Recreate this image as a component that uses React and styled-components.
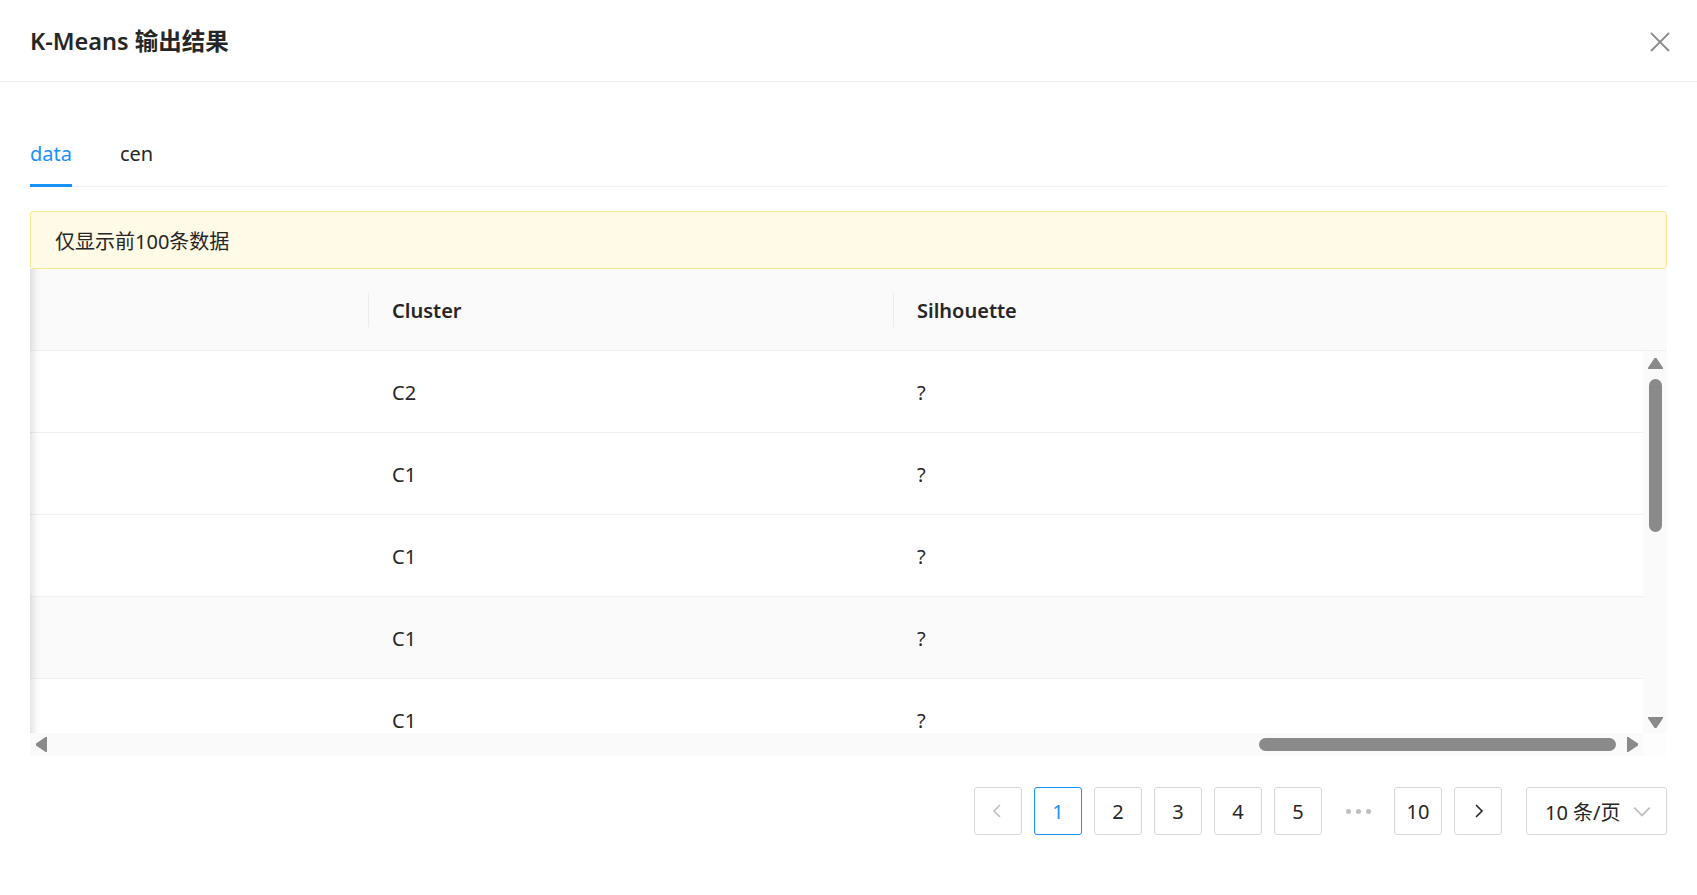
import styled, { createGlobalStyle } from "styled-components";

const GlobalStyle = createGlobalStyle`
  html, body {
    margin: 0;
    padding: 0;
    background: #fff;
  }
  body {
    font-family: "Noto Sans", "Noto Sans CJK SC", sans-serif;
    color: #262626;
  }
  * { box-sizing: border-box; }
`;

const Modal = styled.div`
  width: 100%;
  height: 100vh;
  background: #fff;
`;

const Header = styled.div`
  height: 82px;
  padding: 2px 26px 0 30px;
  display: flex;
  align-items: center;
  justify-content: space-between;
  border-bottom: 1px solid #f0f0f0;
`;

const Title = styled.div`
  font-size: 23.5px;
  font-weight: 600;
  line-height: 33px;
  color: #262626;
`;

const Close = styled.button`
  border: 0;
  background: none;
  padding: 0;
  width: 22px;
  height: 22px;
  display: flex;
  align-items: center;
  justify-content: center;
  color: #8c8c8c;
  cursor: pointer;
`;

const Body = styled.div`
  padding: 36px 30px 0;
`;

const TabNav = styled.div`
  display: flex;
  gap: 48px;
  border-bottom: 1px solid #f0f0f0;
  margin-bottom: 24px;
`;

const Tab = styled.div`
  position: relative;
  padding: 19px 0 16px;
  font-size: 20px;
  line-height: 33px;
  color: ${({ $active }) => ($active ? "#1890ff" : "#262626")};

  &::after {
    content: "";
    display: ${({ $active }) => ($active ? "block" : "none")};
    position: absolute;
    left: 0;
    right: 0;
    bottom: -1px;
    height: 3px;
    background: #1890ff;
  }
`;

const Alert = styled.div`
  height: 58px;
  display: flex;
  align-items: center;
  padding: 0 24px;
  background: #fffbe6;
  border: 1px solid #ffe58f;
  border-radius: 3px;
  font-size: 20px;
  color: #262626;
`;

const TableWrap = styled.div`
  position: relative;
`;

const LeftShadow = styled.div`
  position: absolute;
  left: 0;
  top: 0;
  bottom: 23px;
  width: 20px;
  box-shadow: inset 12px 0 10px -10px rgba(0, 0, 0, 0.16);
  pointer-events: none;
`;

const cols = "338px 525px 1fr";

const HeadRow = styled.div`
  display: grid;
  grid-template-columns: ${cols};
  height: 82px;
  background: #fafafa;
  border-bottom: 1px solid #f0f0f0;
`;

const HeadCell = styled.div`
  position: relative;
  display: flex;
  align-items: center;
  padding: 2px 24px 0;
  font-size: 20px;
  font-weight: 600;
  color: #262626;

  &::before {
    content: "";
    display: ${({ $sep }) => ($sep ? "block" : "none")};
    position: absolute;
    left: 0;
    top: 50%;
    height: 34px;
    margin-top: -17px;
    width: 1px;
    background: #ebebeb;
  }
`;

const BodyArea = styled.div`
  display: flex;
  height: 382px;
`;

const Rows = styled.div`
  flex: 1;
  overflow: hidden;
`;

const Row = styled.div`
  display: grid;
  grid-template-columns: ${cols};
  height: 82px;
  border-bottom: 1px solid #f0f0f0;
  background: ${({ $hover }) => ($hover ? "#fafafa" : "#fff")};
`;

const Cell = styled.div`
  display: flex;
  align-items: center;
  padding: 2px 24px 0;
  font-size: 20px;
  color: #262626;
`;

const VBar = styled.div`
  width: 24px;
  background: #fafafa;
  display: flex;
  flex-direction: column;
  align-items: center;
  padding: 7px 0 5px;
`;

const VThumb = styled.div`
  width: 13px;
  height: 153px;
  margin-top: 10px;
  border-radius: 7px;
  background: #8a8a8a;
`;

const Spacer = styled.div`
  flex: 1;
`;

const HBarRow = styled.div`
  display: flex;
  height: 23px;
`;

const HTrack = styled.div`
  flex: 1;
  display: flex;
  align-items: center;
  padding: 0 5px 0 6px;
  background: #fafafa;
`;

const HThumb = styled.div`
  width: 357px;
  height: 13px;
  margin-right: 11px;
  border-radius: 7px;
  background: #8a8a8a;
`;

const Corner = styled.div`
  width: 24px;
  background: #fdfdfd;
`;

const Pager = styled.div`
  display: flex;
  justify-content: flex-end;
  align-items: center;
  gap: 12px;
  margin-top: 31px;
`;

const PageItem = styled.div`
  width: 48px;
  height: 48px;
  display: flex;
  align-items: center;
  justify-content: center;
  border: 1px solid ${({ $active }) => ($active ? "#1890ff" : "#d9d9d9")};
  border-radius: 3px;
  font-size: 20px;
  color: ${({ $active, $disabled }) =>
    $active ? "#1890ff" : $disabled ? "#bfbfbf" : "#262626"};
  background: #fff;
`;

const Ellipsis = styled.div`
  width: 48px;
  height: 48px;
  display: flex;
  align-items: center;
  justify-content: center;
  gap: 5px;
`;

const Dot = styled.span`
  width: 5px;
  height: 5px;
  border-radius: 50%;
  background: #bfbfbf;
`;

const SizeSelect = styled.div`
  width: 141px;
  height: 48px;
  margin-left: 12px;
  display: flex;
  align-items: center;
  justify-content: space-between;
  padding: 0 14px 0 18px;
  border: 1px solid #d9d9d9;
  border-radius: 3px;
  font-size: 20px;
  color: #262626;
`;

const Tri = ({ dir }) => {
  const pts = {
    up: "7.5,0 15,11 0,11",
    down: "0,0 15,0 7.5,11",
    left: "11,0 11,15 0,7.5",
    right: "0,0 11,7.5 0,15",
  }[dir];
  const vert = dir === "up" || dir === "down";
  return (
    <svg width={vert ? 15 : 11} height={vert ? 11 : 15} viewBox={vert ? "0 0 15 11" : "0 0 11 15"}>
      <polygon points={pts} fill="#8a8a8a" stroke="#8a8a8a" strokeWidth="1.5" strokeLinejoin="round" />
    </svg>
  );
};

const Chevron = ({ dir, color, size = 18 }) => {
  const d = {
    left: "M11 3 L5 9 L11 15",
    right: "M7 3 L13 9 L7 15",
    down: "M2 6 L9 13 L16 6",
  }[dir];
  return (
    <svg width={size} height={size} viewBox="0 0 18 18">
      <path d={d} fill="none" stroke={color} strokeWidth="1.6" />
    </svg>
  );
};

const rows = [
  { cluster: "C2", sil: "?" },
  { cluster: "C1", sil: "?" },
  { cluster: "C1", sil: "?" },
  { cluster: "C1", sil: "?", hover: true },
  { cluster: "C1", sil: "?" },
];

export default function App() {
  return (
    <>
      <GlobalStyle />
      <Modal>
        <Header>
          <Title>K-Means 输出结果</Title>
          <Close aria-label="close">
            <svg width="20" height="20" viewBox="0 0 20 20">
              <path d="M1 1 L19 19 M19 1 L1 19" stroke="currentColor" strokeWidth="1.8" fill="none" />
            </svg>
          </Close>
        </Header>
        <Body>
          <TabNav>
            <Tab $active>data</Tab>
            <Tab>cen</Tab>
          </TabNav>
          <Alert>仅显示前100条数据</Alert>
          <TableWrap>
            <HeadRow>
              <HeadCell />
              <HeadCell $sep>Cluster</HeadCell>
              <HeadCell $sep>Silhouette</HeadCell>
            </HeadRow>
            <BodyArea>
              <Rows>
                {rows.map((r, i) => (
                  <Row key={i} $hover={r.hover}>
                    <Cell />
                    <Cell>{r.cluster}</Cell>
                    <Cell>{r.sil}</Cell>
                  </Row>
                ))}
              </Rows>
              <VBar>
                <Tri dir="up" />
                <VThumb />
                <Spacer />
                <Tri dir="down" />
              </VBar>
            </BodyArea>
            <HBarRow>
              <HTrack>
                <Tri dir="left" />
                <Spacer />
                <HThumb />
                <Tri dir="right" />
              </HTrack>
              <Corner />
            </HBarRow>
            <LeftShadow />
          </TableWrap>
          <Pager>
            <PageItem $disabled>
              <Chevron dir="left" color="#bfbfbf" />
            </PageItem>
            <PageItem $active>1</PageItem>
            <PageItem>2</PageItem>
            <PageItem>3</PageItem>
            <PageItem>4</PageItem>
            <PageItem>5</PageItem>
            <Ellipsis>
              <Dot />
              <Dot />
              <Dot />
            </Ellipsis>
            <PageItem>10</PageItem>
            <PageItem>
              <Chevron dir="right" color="#262626" />
            </PageItem>
            <SizeSelect>
              <span>10 条/页</span>
              <Chevron dir="down" color="#bfbfbf" size={20} />
            </SizeSelect>
          </Pager>
        </Body>
      </Modal>
    </>
  );
}
